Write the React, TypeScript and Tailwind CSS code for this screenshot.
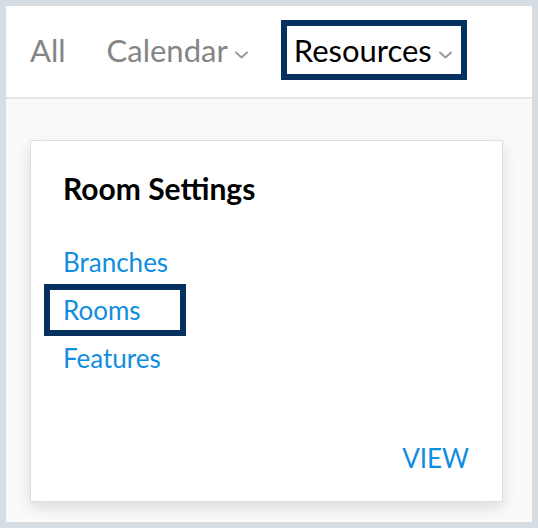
import { ReactNode } from 'react'

function Chevron() {
  return (
    <svg width="15" height="8" viewBox="0 0 15 8" className="ml-[6px] mt-[9px] shrink-0">
      <path d="M2 1.5 L7.5 6.5 L13 1.5" fill="none" stroke="#9a9a9a" strokeWidth="2" strokeLinecap="round" strokeLinejoin="round" />
    </svg>
  )
}

function NavItem({ children, active }: { children: ReactNode; active?: boolean }) {
  return (
    <div
      className={`flex items-center h-[60px] border-[6px] pl-[7px] pr-[8px] text-[31px] leading-[36px] ${
        active ? 'border-[#06305e] text-black' : 'border-transparent text-[#858585]'
      }`}
    >
      {children}
    </div>
  )
}

const links = ['Branches', 'Rooms', 'Features']

export default function App() {
  return (
    <div
      className="w-[538px] h-[528px] border-[6px] border-[#d6dee4] flex flex-col bg-[#fafafa]"
      style={{ fontFamily: 'Lato, "Noto Sans", sans-serif' }}
    >
      <header className="h-[93px] shrink-0 bg-white border-b-2 border-[#e6e6e6] flex items-start pt-[14px] pl-[11px]">
        <NavItem>All</NavItem>
        <div className="w-[14px]" />
        <NavItem>
          Calendar
          <Chevron />
        </NavItem>
        <div className="w-[18px]" />
        <NavItem active>
          Resources
          <Chevron />
        </NavItem>
      </header>

      <main className="flex-1 pt-[41px] pl-[24px] pr-[29px]">
        <div className="h-[362px] bg-white border border-[#dedede] shadow-[0_6px_14px_rgba(0,0,0,0.12)] flex flex-col pt-[29px] pl-[32px] pr-[33px] pb-[27px]">
          <h2 className="text-[30px] leading-[36px] font-bold text-black">Room Settings</h2>
          <ul className="mt-[32px] flex flex-col">
            {links.map((label) => (
              <li key={label} className="h-[48px]">
                <a
                  href="#"
                  className={`inline-block text-[26px] leading-[48px] text-[#0f8de0] ${
                    label === 'Rooms'
                      ? '-ml-[17px] pl-[17px] w-[138px] outline-[6px] outline-solid outline-[#06305e] -outline-offset-4'
                      : ''
                  }`}
                >
                  {label}
                </a>
              </li>
            ))}
          </ul>
          <div className="mt-auto flex justify-end">
            <a href="#" className="text-[26px] leading-[31px] text-[#0f8de0]">
              VIEW
            </a>
          </div>
        </div>
      </main>
    </div>
  )
}
